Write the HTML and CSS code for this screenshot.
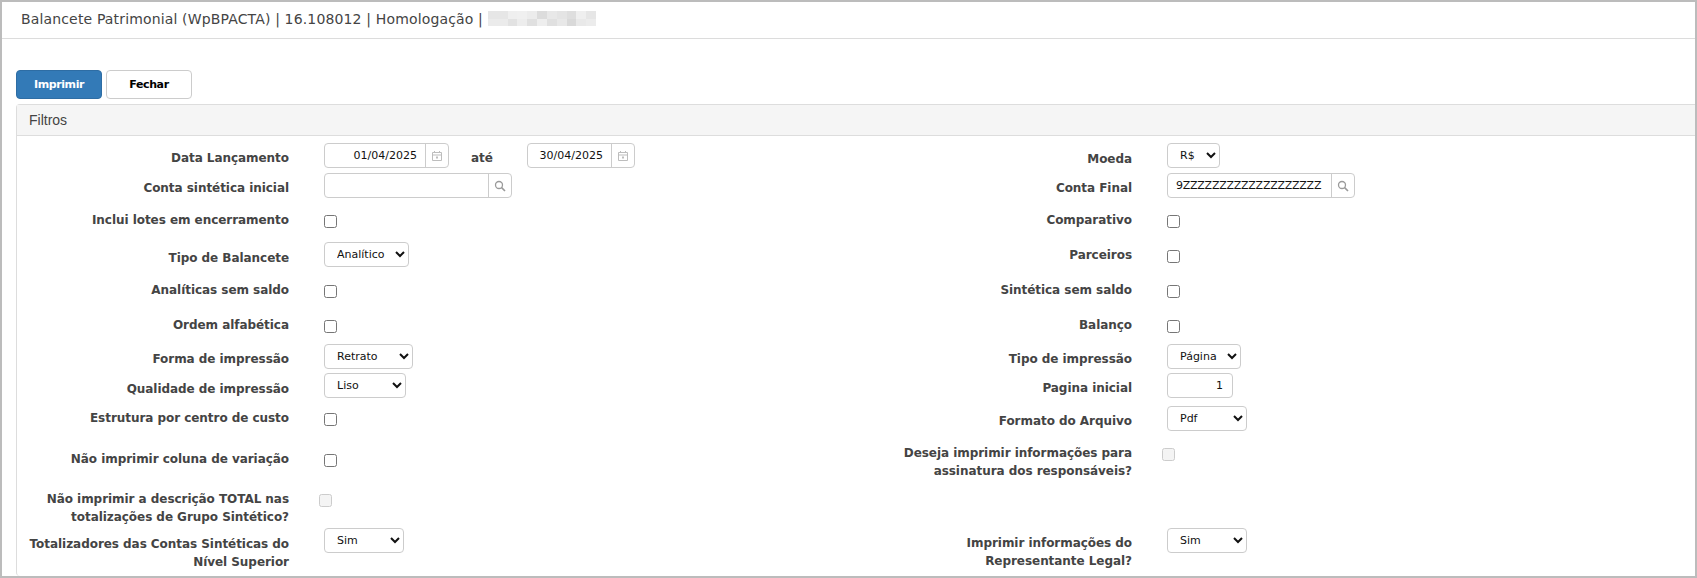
FILE: index.html
```html
<!DOCTYPE html>
<html lang="pt-BR">
<head>
<meta charset="utf-8">
<title>Balancete Patrimonial</title>
<link rel="stylesheet" href="styles.css">
</head>
<body>
<div class="frame">
  <header class="top">
    <span>Balancete Patrimonial (WpBPACTA) | 16.108012 | Homologação |</span>
    <svg class="mosaic" width="108" height="15" viewBox="0 0 11 2" preserveAspectRatio="none" shape-rendering="crispEdges" aria-hidden="true">
      <rect x="0" y="0" width="2" height="1" fill="#e6e6e6"/><rect x="2" y="0" width="1" height="1" fill="#efefef"/><rect x="3" y="0" width="1" height="1" fill="#f0f0f0"/><rect x="4" y="0" width="1" height="1" fill="#ececec"/><rect x="5" y="0" width="1" height="1" fill="#dcdcdc"/><rect x="6" y="0" width="1" height="1" fill="#e8e8e8"/><rect x="7" y="0" width="1" height="1" fill="#e4e4e4"/><rect x="8" y="0" width="1" height="1" fill="#dedede"/><rect x="9" y="0" width="1" height="1" fill="#efefef"/><rect x="10" y="0" width="1" height="1" fill="#e6e6e6"/>
      <rect x="0" y="1" width="2" height="1" fill="#ebebeb"/><rect x="2" y="1" width="1" height="1" fill="#e2e2e2"/><rect x="3" y="1" width="1" height="1" fill="#ededed"/><rect x="4" y="1" width="1" height="1" fill="#e0e0e0"/><rect x="5" y="1" width="1" height="1" fill="#eeeeee"/><rect x="6" y="1" width="1" height="1" fill="#e0e0e0"/><rect x="7" y="1" width="1" height="1" fill="#e8e8e8"/><rect x="8" y="1" width="1" height="1" fill="#d9d9d9"/><rect x="9" y="1" width="1" height="1" fill="#e9e9e9"/><rect x="10" y="1" width="1" height="1" fill="#ececec"/>
    </svg>
  </header>
  <div class="actions">
    <button class="btn primary" type="button">Imprimir</button>
    <button class="btn" type="button">Fechar</button>
  </div>
  <section class="panel">
    <div class="panel-head">Filtros</div>
    <div class="form">
      <div class="row r1">
        <label class="lbl mt6">Data Lançamento</label>
        <div class="ctl date-pair">
          <span class="group w-date"><input class="inp num" value="01/04/2025"><span class="addon"><svg class="ico" viewBox="0 0 12 12"><path d="M1.5 2.5h9v8h-9zM1.5 5h9M3.5 1v2M8.5 1v2" fill="none" stroke="#bdbdbd"/><rect x="5" y="6.5" width="2" height="2" fill="#bdbdbd"/></svg></span></span>
          <span class="ate">até</span>
          <span class="group w-date2"><input class="inp num" value="30/04/2025"><span class="addon"><svg class="ico" viewBox="0 0 12 12"><path d="M1.5 2.5h9v8h-9zM1.5 5h9M3.5 1v2M8.5 1v2" fill="none" stroke="#bdbdbd"/><rect x="5" y="6.5" width="2" height="2" fill="#bdbdbd"/></svg></span></span>
        </div>
        <label class="lbl mt7">Moeda</label>
        <div class="ctl"><select class="sel w-moeda"><option>R$</option></select></div>
      </div>
      <div class="row r2">
        <label class="lbl mt6">Conta sintética inicial</label>
        <div class="ctl"><span class="group w-conta"><input class="inp"><span class="addon"><svg class="ico" viewBox="0 0 12 12"><circle cx="5" cy="5" r="3.5" fill="none" stroke="#9a9a9a" stroke-width="1.3"/><path d="M7.6 7.6L11 11" stroke="#9a9a9a" stroke-width="1.6"/></svg></span></span></div>
        <label class="lbl mt6">Conta Final</label>
        <div class="ctl"><span class="group w-conta"><input class="inp tight" value="9ZZZZZZZZZZZZZZZZZZZ"><span class="addon"><svg class="ico" viewBox="0 0 12 12"><circle cx="5" cy="5" r="3.5" fill="none" stroke="#9a9a9a" stroke-width="1.3"/><path d="M7.6 7.6L11 11" stroke="#9a9a9a" stroke-width="1.6"/></svg></span></span></div>
      </div>
      <div class="row r3">
        <label class="lbl mt3">Inclui lotes em encerramento</label>
        <div class="ctl mt7"><input class="chk" type="checkbox"></div>
        <label class="lbl mt3">Comparativo</label>
        <div class="ctl mt7"><input class="chk" type="checkbox"></div>
      </div>
      <div class="row r4">
        <label class="lbl mt7">Tipo de Balancete</label>
        <div class="ctl"><select class="sel w-tipo"><option>Analítico</option></select></div>
        <label class="lbl mt4">Parceiros</label>
        <div class="ctl mt8"><input class="chk" type="checkbox"></div>
      </div>
      <div class="row r5">
        <label class="lbl mt4">Analíticas sem saldo</label>
        <div class="ctl mt8"><input class="chk" type="checkbox"></div>
        <label class="lbl mt4">Sintética sem saldo</label>
        <div class="ctl mt8"><input class="chk" type="checkbox"></div>
      </div>
      <div class="row r6">
        <label class="lbl mt4">Ordem alfabética</label>
        <div class="ctl mt8"><input class="chk" type="checkbox"></div>
        <label class="lbl mt4">Balanço</label>
        <div class="ctl mt8"><input class="chk" type="checkbox"></div>
      </div>
      <div class="row r7">
        <label class="lbl mt6">Forma de impressão</label>
        <div class="ctl"><select class="sel w-forma"><option>Retrato</option></select></div>
        <label class="lbl mt6">Tipo de impressão</label>
        <div class="ctl"><select class="sel w-timp"><option>Página</option></select></div>
      </div>
      <div class="row r8">
        <label class="lbl mt7">Qualidade de impressão</label>
        <div class="ctl"><select class="sel w-qual"><option>Liso</option></select></div>
        <label class="lbl mt6">Pagina inicial</label>
        <div class="ctl"><input class="inp page" value="1"></div>
      </div>
      <div class="row r9">
        <label class="lbl mt3">Estrutura por centro de custo</label>
        <div class="ctl mt7"><input class="chk" type="checkbox"></div>
        <label class="lbl mt6">Formato do Arquivo</label>
        <div class="ctl"><select class="sel w-sim"><option>Pdf</option></select></div>
      </div>
      <div class="row r10">
        <label class="lbl mt6">Não imprimir coluna de variação</label>
        <div class="ctl mt10"><input class="chk" type="checkbox"></div>
        <label class="lbl">Deseja imprimir informações para<br>assinatura dos responsáveis?</label>
        <div class="ctl mt4"><input class="chk off" type="checkbox" disabled></div>
      </div>
      <div class="row r11">
        <label class="lbl">Não imprimir a descrição TOTAL nas<br>totalizações de Grupo Sintético?</label>
        <div class="ctl mt4"><input class="chk off" type="checkbox" disabled></div>
      </div>
      <div class="row r12">
        <label class="lbl mt7">Totalizadores das Contas Sintéticas do<br>Nível Superior</label>
        <div class="ctl"><select class="sel w-totl"><option>Sim</option></select></div>
        <label class="lbl mt6">Imprimir informações do<br>Representante Legal?</label>
        <div class="ctl"><select class="sel w-sim"><option>Sim</option></select></div>
      </div>
    </div>
  </section>
</div>
</body>
</html>
```
FILE: styles.css
```css
* { box-sizing: border-box; }
html, body { margin: 0; height: 100%; }
body { background: #fff; font-family: "DejaVu Sans", sans-serif; overflow: hidden; }
.frame { height: 578px; border: 2px solid #bcbcbc; display: flex; flex-direction: column; }
.top { height: 37px; border-bottom: 1px solid #dcdcdc; padding: 0 0 3px 19px; display: flex; align-items: center; gap: 5px; font-size: 14px; letter-spacing: .15px; color: #444; }
.actions { display: flex; gap: 4px; padding: 31px 0 0 14px; height: 65px; }
.btn { width: 86px; height: 29px; border: 1px solid #ccc; border-radius: 4px; background: #fff; color: #000; font: bold 11px "DejaVu Sans", sans-serif; letter-spacing: -.4px; padding: 0; }
.btn.primary { background: #337ab7; border-color: #2e6da4; color: #fff; }
.panel { margin-left: 14px; flex: 1; min-height: 0; border: 1px solid #ddd; border-right: 0; border-bottom: 0; border-radius: 4px 0 0 4px; }
.panel-head { height: 31px; background: #f5f5f5; border-bottom: 1px solid #ddd; padding-left: 12px; display: flex; align-items: center; font: 14px "Liberation Sans", sans-serif; color: #444; }
.form { padding-top: 7px; }
.row { display: grid; grid-template-columns: 272px 555px 288px 1fr; align-items: start; }
.r1 { height: 30px; } .r2 { height: 35px; } .r3 { height: 34px; } .r4 { height: 35px; }
.r5 { height: 35px; } .r6 { height: 32px; } .r7 { height: 29px; } .r8 { height: 33px; }
.r9 { height: 38px; } .r10 { height: 46px; } .r11 { height: 38px; } .r12 { height: 47px; }
.lbl { display: block; text-align: right; font-weight: 700; font-size: 12px; letter-spacing: -.05px; line-height: 18px; color: #444; white-space: nowrap; }
.ctl { padding-left: 35px; display: flex; align-items: flex-start; }
.mt3 { margin-top: 3px; } .mt4 { margin-top: 4px; } .mt6 { margin-top: 6px; }
.mt7 { margin-top: 7px; } .mt8 { margin-top: 8px; } .mt10 { margin-top: 10px; }
.group { display: flex; height: 25px; border: 1px solid #ccc; border-radius: 4px; background: #fff; }
.inp { border: 0; outline: 0; height: 100%; min-width: 0; flex: 1; width: 100%; background: transparent; font: 11px "DejaVu Sans", sans-serif; color: #111; padding: 0 8px 0 8px; }
.inp.num { text-align: right; }
.inp.tight { letter-spacing: -.25px; }
.addon { width: 23px; border-left: 1px solid #ccc; display: flex; align-items: center; justify-content: center; flex: none; }
.ico { width: 12px; height: 12px; }
.w-date { width: 125px; }
.w-date2 { width: 108px; }
.w-conta { width: 188px; }
.ate { width: 78px; padding-left: 22px; padding-top: 6px; font-weight: 700; font-size: 12px; line-height: 18px; color: #444; }
.sel { height: 25px; border: 1px solid #ccc; border-radius: 4px; background: #fff; font: 11px "DejaVu Sans", sans-serif; color: #111; padding: 0 0 0 8px; }
.w-moeda { width: 53px; } .w-tipo { width: 85px; } .w-forma { width: 89px; } .w-qual { width: 82px; }
.w-timp { width: 74px; } .w-sim { width: 80px; } .w-totl { width: 80px; }
.page { flex: none; width: 66px; height: 25px; border: 1px solid #ccc; border-radius: 4px; text-align: right; padding-right: 9px; }
.chk { appearance: none; width: 13px; height: 13px; margin: 0; border: 1px solid #767676; border-radius: 2.5px; background: #fff; }
.chk.off { border-color: #ccc; background: #f4f4f4; margin-left: -5px; }
```
